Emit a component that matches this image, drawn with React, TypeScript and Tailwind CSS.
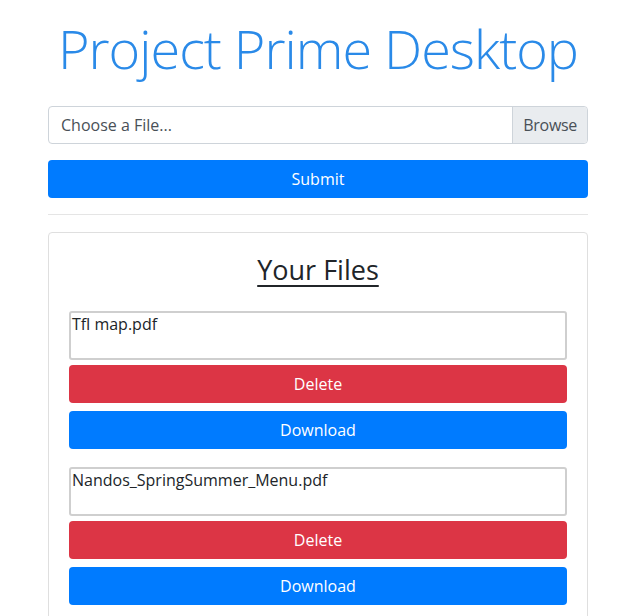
const files = ['Tfl map.pdf', 'Nandos_SpringSummer_Menu.pdf'];

function FileItem({ name }: { name: string }) {
  return (
    <div className="mb-[18px]">
      <div className="h-[49px] rounded-[3px] border-2 border-[#cfcfcf] px-[1px] text-[16px] leading-[22px] text-[#212529]">
        {name}
      </div>
      <button className="mt-[5px] block h-[38px] w-full rounded-[4px] bg-[#dc3545] text-[16px] text-white">Delete</button>
      <button className="mt-[8px] block h-[38px] w-full rounded-[4px] bg-[#007bff] text-[16px] text-white">Download</button>
    </div>
  );
}

export default function App() {
  return (
    <div className="min-h-[616px] bg-white font-['Open_Sans',sans-serif] text-[#212529]">
      <div className="ml-[48px] w-[540px] pt-[12px]">
        <h1 className="whitespace-nowrap text-center text-[54px] font-light leading-[72px] tracking-[-1px] text-[#2a8ae8]">
          Project Prime Desktop
        </h1>
        <div className="mt-[22px] flex h-[38px] rounded-[4px] border border-[#ced4da]">
          <div className="flex flex-1 items-center px-3 text-[16px] text-[#495057]">Choose a File...</div>
          <div className="flex items-center rounded-r-[4px] border-l border-[#ced4da] bg-[#e9ecef] px-[10px] text-[16px] tracking-[-0.3px] text-[#495057]">Browse</div>
        </div>
        <button className="mt-[16px] block h-[38px] w-full rounded-[4px] bg-[#007bff] text-[16px] text-white">Submit</button>
        <hr className="mt-[16px] border-t border-[#e5e5e5]" />
        <div className="mt-[17px] rounded-[4px] border border-[#dfdfdf] px-[20px] pt-[18px]">
          <h2 className="mb-[22px] text-center text-[27px] font-medium leading-[38px]">
            <span className="underline decoration-2 underline-offset-[5px]">Your Files</span>
          </h2>
          {files.map((f) => (
            <FileItem key={f} name={f} />
          ))}
        </div>
      </div>
    </div>
  );
}
